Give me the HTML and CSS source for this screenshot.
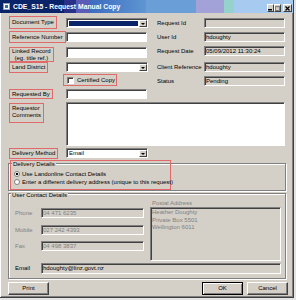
FILE: index.html
```html
<!DOCTYPE html>
<html lang="en">
<head>
    <meta charset="UTF-8">
    <meta name="viewport" content="width=device-width, initial-scale=1.0">
    <title>CDE_S15 - Request Manual Copy</title>
    <link rel="stylesheet" href="styles.css">
</head>
<body>
    <div class="window">
        <div class="titlebar">
            <svg class="app-icon" width="7" height="7" viewBox="0 0 7 7">
                <rect x="0.5" y="0.5" width="6" height="6" fill="#fff" stroke="#8ca0c0"/>
                <rect x="2" y="2" width="3" height="3" fill="#3a6ea5"/>
            </svg>
            <span class="title">CDE_S15 - Request Manual Copy</span>
            <div class="caption-btns">
                <span class="cbtn"><svg width="5" height="6" viewBox="0 0 5 6"><rect x="0" y="4" width="4" height="1.5" fill="#000"/></svg></span>
                <span class="cbtn"><svg width="5" height="5" viewBox="0 0 5 5"><rect x="0.5" y="0.5" width="4" height="4" fill="none" stroke="#808080"/><rect x="0" y="0" width="5" height="1.2" fill="#808080"/></svg></span>
                <span class="cbtn close"><svg width="5" height="5" viewBox="0 0 5 5"><path d="M0.5 0.5 L4.5 4.5 M4.5 0.5 L0.5 4.5" stroke="#000" stroke-width="1.2"/></svg></span>
            </div>
        </div>

        <div class="content">
            <div class="top">
                <div class="left-col">
                    <div class="frow doc">
                        <div class="lcell"><span class="tag">Document Type</span></div>
                        <div class="combo focus"><span class="combo-val"></span><span class="drop"><i></i></span></div>
                    </div>
                    <div class="frow ref">
                        <div class="lcell"><span class="tag">Reference Number</span></div>
                        <div class="edit"></div>
                    </div>
                    <div class="frow linked">
                        <div class="lcell"><span class="tag two">Linked Record<br>(eg. title ref.)</span></div>
                        <div class="edit tall"></div>
                    </div>
                    <div class="frow land">
                        <div class="lcell"><span class="tag">Land District</span></div>
                        <div class="combo"><span class="combo-val"></span><span class="drop"><i></i></span></div>
                    </div>
                    <div class="cert"><span class="check"></span>Certified Copy</div>
                    <div class="frow reqby">
                        <div class="lcell"><span class="tag">Requested By</span></div>
                        <div class="edit"></div>
                    </div>
                </div>

                <div class="right-col">
                    <div class="info-row"><span class="info-label">Request Id</span><span class="ro"></span></div>
                    <div class="info-row"><span class="info-label">User Id</span><span class="ro">hdoughty</span></div>
                    <div class="info-row"><span class="info-label">Request Date</span><span class="ro">05/09/2012 11:30:24</span></div>
                    <div class="info-row wide-gap"><span class="info-label">Client Reference</span><span class="ro">hdoughty</span></div>
                    <div class="info-row"><span class="info-label">Status</span><span class="ro">Pending</span></div>
                </div>
            </div>

            <div class="frow comments">
                <div class="lcell"><span class="tag lines">Requestor<br>Comments</span></div>
                <div class="memo"></div>
            </div>

            <div class="frow method">
                <div class="lcell"><span class="tag">Delivery Method</span></div>
                <div class="combo"><span class="combo-val">Email</span><span class="drop"><i></i></span></div>
            </div>

            <div class="group delivery">
                <div class="hl">
                    <span class="legend">Delivery Details</span>
                    <div class="radio-row first"><span class="radio checked"></span>Use Landonline Contact Details</div>
                    <div class="radio-row"><span class="radio"></span>Enter a different delivery address (unique to this request)</div>
                </div>
            </div>

            <div class="group contact">
                <span class="legend">User Contact Details</span>
                <div class="contact-body">
                    <div class="cfields">
                        <div class="crow"><span class="clabel">Phone</span><span class="cedit">04 471 6235</span></div>
                        <div class="crow mobile"><span class="clabel">Mobile</span><span class="cedit">027 242 4393</span></div>
                        <div class="crow fax"><span class="clabel">Fax</span><span class="cedit">04 498 3837</span></div>
                    </div>
                    <div class="postal">
                        <div class="postal-label">Postal Address</div>
                        <div class="postal-box">Heather Doughty<br>Private Box 5501<br>Wellington 6011</div>
                    </div>
                </div>
                <div class="erow"><span class="elabel">Email</span><span class="eedit">hdoughty@linz.govt.nz</span></div>
            </div>

            <div class="buttons">
                <button class="btn">Print</button>
                <button class="btn ok">OK</button>
                <button class="btn cancel">Cancel</button>
            </div>
        </div>
    </div>
</body>
</html>
```

FILE: styles.css
```css
* {
    box-sizing: border-box;
}

html {
    background: #e4e4e4;
}

body {
    margin: 0;
    font-family: "Liberation Sans", Arial, sans-serif;
    font-size: 6px;
    line-height: 7px;
    color: #000;
}

.window {
    width: 294px;
    height: 298px;
    background: #d4d0c8;
    border-right: 1px solid #404040;
    border-bottom: 1px solid #404040;
    box-shadow: inset 1px 0 #fff, inset -1px -1px #808080;
}

/* title bar */
.titlebar {
    height: 13px;
    display: flex;
    align-items: center;
    padding-left: 3px;
    color: #fff;
    font-weight: bold;
    font-size: 6.8px;
    background: linear-gradient(90deg,
        #0a246a 0, #0a246a 64px,
        #283088 64px, #283088 76px,
        #5a5cb8 76px, #5a5cb8 90px,
        #3c6cc0 90px, #5e96d2 146px,
        #6a9ed6 146px, #6a9ed6 196px,
        #a2a2d8 196px, #a2a2d8 224px,
        #96d2cc 224px, #96d2cc 234px,
        #a6caf0 234px);
}

.app-icon {
    margin-right: 3px;
    flex: none;
}

.caption-btns {
    margin-left: auto;
    margin-right: 1px;
    align-self: flex-end;
    margin-bottom: 1px;
    display: flex;
}

.cbtn {
    width: 7px;
    height: 8px;
    background: #d4d0c8;
    border: 1px solid;
    border-color: #fff #404040 #404040 #fff;
    display: flex;
    align-items: center;
    justify-content: center;
}

.cbtn.close {
    width: 9px;
    margin-left: 2px;
}

/* dialog body */
.content {
    padding: 1px 7px 0 8px;
}

.top {
    display: grid;
    grid-template-columns: 140px 1fr;
}

.frow {
    display: flex;
    align-items: flex-start;
}

.lcell {
    width: 58px;
    height: 100%;
    padding-left: 1px;
    flex: none;
}

.tag {
    display: flex;
    flex-direction: column;
    justify-content: center;
    width: max-content;
    height: 100%;
    border: 1px solid #e06a6a;
    padding: 0 2px;
    white-space: nowrap;
}

.tag.two {
    text-align: center;
    line-height: 6.5px;
}

.tag.lines {
    justify-content: flex-start;
    height: 20px;
    margin-top: 1px;
    padding-top: 1px;
}

.doc { margin-top: 2px; height: 13px; }
.ref { margin-top: 2px; height: 12px; }
.linked { margin-top: 4px; height: 15px; }
.land { height: 11px; }
.reqby { margin-top: 3px; height: 10px; }
.comments { margin-top: 3px; height: 44px; }
.method { margin-top: 2px; height: 11px; }

.doc .combo { margin-top: 2px; }
.ref .edit { margin-top: 1px; }

.edit,
.combo,
.memo,
.ro,
.cedit,
.eedit,
.postal-box,
.check {
    border: 1px solid;
    border-color: #808080 #fff #fff #808080;
    box-shadow: inset 1px 1px #404040;
}

.edit {
    width: 81px;
    height: 10px;
    background: #fff;
}

.edit.tall {
    height: 11px;
}

.combo {
    width: 82px;
    height: 10px;
    background: #fff;
    display: flex;
    padding: 1px 0 0 1px;
}

.combo-val {
    flex: 1;
    padding-left: 1px;
    line-height: 7px;
}

.combo.focus .combo-val {
    background: #0a246a;
    margin: 1px;
}

.drop {
    width: 8px;
    height: 7px;
    background: #d4d0c8;
    border: 1px solid;
    border-color: #fff #404040 #404040 #fff;
    display: flex;
    align-items: center;
    justify-content: center;
}

.drop i {
    width: 0;
    height: 0;
    border-left: 2px solid transparent;
    border-right: 2px solid transparent;
    border-top: 2px solid #000;
}

.cert {
    margin: 1px 0 0 55px;
    width: 54px;
    height: 12px;
    border: 1px solid #e06a6a;
    padding-left: 3px;
    display: flex;
    align-items: center;
    white-space: nowrap;
}

.check {
    width: 7px;
    height: 7px;
    background: #fff;
    margin-right: 3px;
    flex: none;
}

.memo {
    width: 219px;
    height: 44px;
    background: #fff;
}

/* read-only info on the right */
.info-row {
    display: flex;
    align-items: center;
    height: 10px;
    margin-top: 4px;
}

.info-row.wide-gap {
    margin-top: 6px;
}

.info-label {
    width: 56px;
    padding-left: 9px;
    white-space: nowrap;
}

.ro {
    width: 81px;
    height: 10px;
    background: #d4d0c8;
    padding-left: 1px;
    line-height: 8px;
    white-space: nowrap;
}

/* group boxes */
.group {
    border: 1px solid #808080;
    box-shadow: inset 1px 1px #fff, 1px 1px #fff;
}

.legend {
    display: block;
    width: max-content;
    background: #d4d0c8;
    padding: 0 1px;
}

.delivery {
    margin-top: 4px;
    height: 28px;
}

.hl {
    margin: -4px 0 0 1px;
    width: 161px;
    height: 30px;
    border: 1px solid #e06a6a;
}

.hl .legend {
    margin-left: 1px;
}

.radio-row {
    display: flex;
    align-items: center;
    height: 8px;
    padding-left: 3px;
    white-space: nowrap;
}

.radio-row.first {
    margin-top: 2px;
}

.radio {
    width: 6px;
    height: 6px;
    border-radius: 50%;
    border: 1px solid #808080;
    background: #fff;
    margin-right: 2px;
    flex: none;
}

.radio.checked {
    background: radial-gradient(circle, #000 0 1.1px, #fff 1.6px);
}

.contact {
    margin-top: 2px;
    height: 86px;
}

.contact .legend {
    margin: -2px 0 0 2px;
}

.contact-body {
    display: flex;
}

.cfields {
    padding-top: 9px;
}

.crow {
    display: flex;
    align-items: center;
    height: 10px;
}

.crow.mobile { margin-top: 7px; }
.crow.fax { margin-top: 6px; }

.clabel,
.elabel {
    width: 32px;
    padding-left: 6px;
    color: #808080;
}

.elabel {
    color: #000;
}

.cedit {
    width: 103px;
    height: 10px;
    background: #d4d0c8;
    color: #808080;
    padding-left: 1px;
    line-height: 8px;
}

.postal {
    margin-left: 6px;
}

.postal-label {
    height: 8px;
    line-height: 8px;
    padding-left: 2px;
    color: #808080;
}

.postal-box {
    width: 131px;
    height: 54px;
    background: #d4d0c8;
    color: #808080;
    padding: 1px;
    line-height: 7.5px;
}

.erow {
    margin-top: 2px;
    display: flex;
    align-items: center;
    height: 11px;
}

.eedit {
    width: 240px;
    height: 11px;
    background: #d4d0c8;
    padding-left: 1px;
    line-height: 9px;
}

/* buttons */
.buttons {
    display: flex;
    margin: 3px -2px 0 0;
}

.btn {
    width: 41px;
    height: 13px;
    padding: 0;
    font: inherit;
    color: #000;
    background: #d4d0c8;
    border: 1px solid;
    border-color: #fff #404040 #404040 #fff;
    box-shadow: inset -1px -1px #808080;
}

.btn.ok {
    margin-left: auto;
    border-color: #000;
    box-shadow: inset 1px 1px #fff, inset -1px -1px #808080;
}

.btn.cancel {
    margin-left: 4px;
}
```
